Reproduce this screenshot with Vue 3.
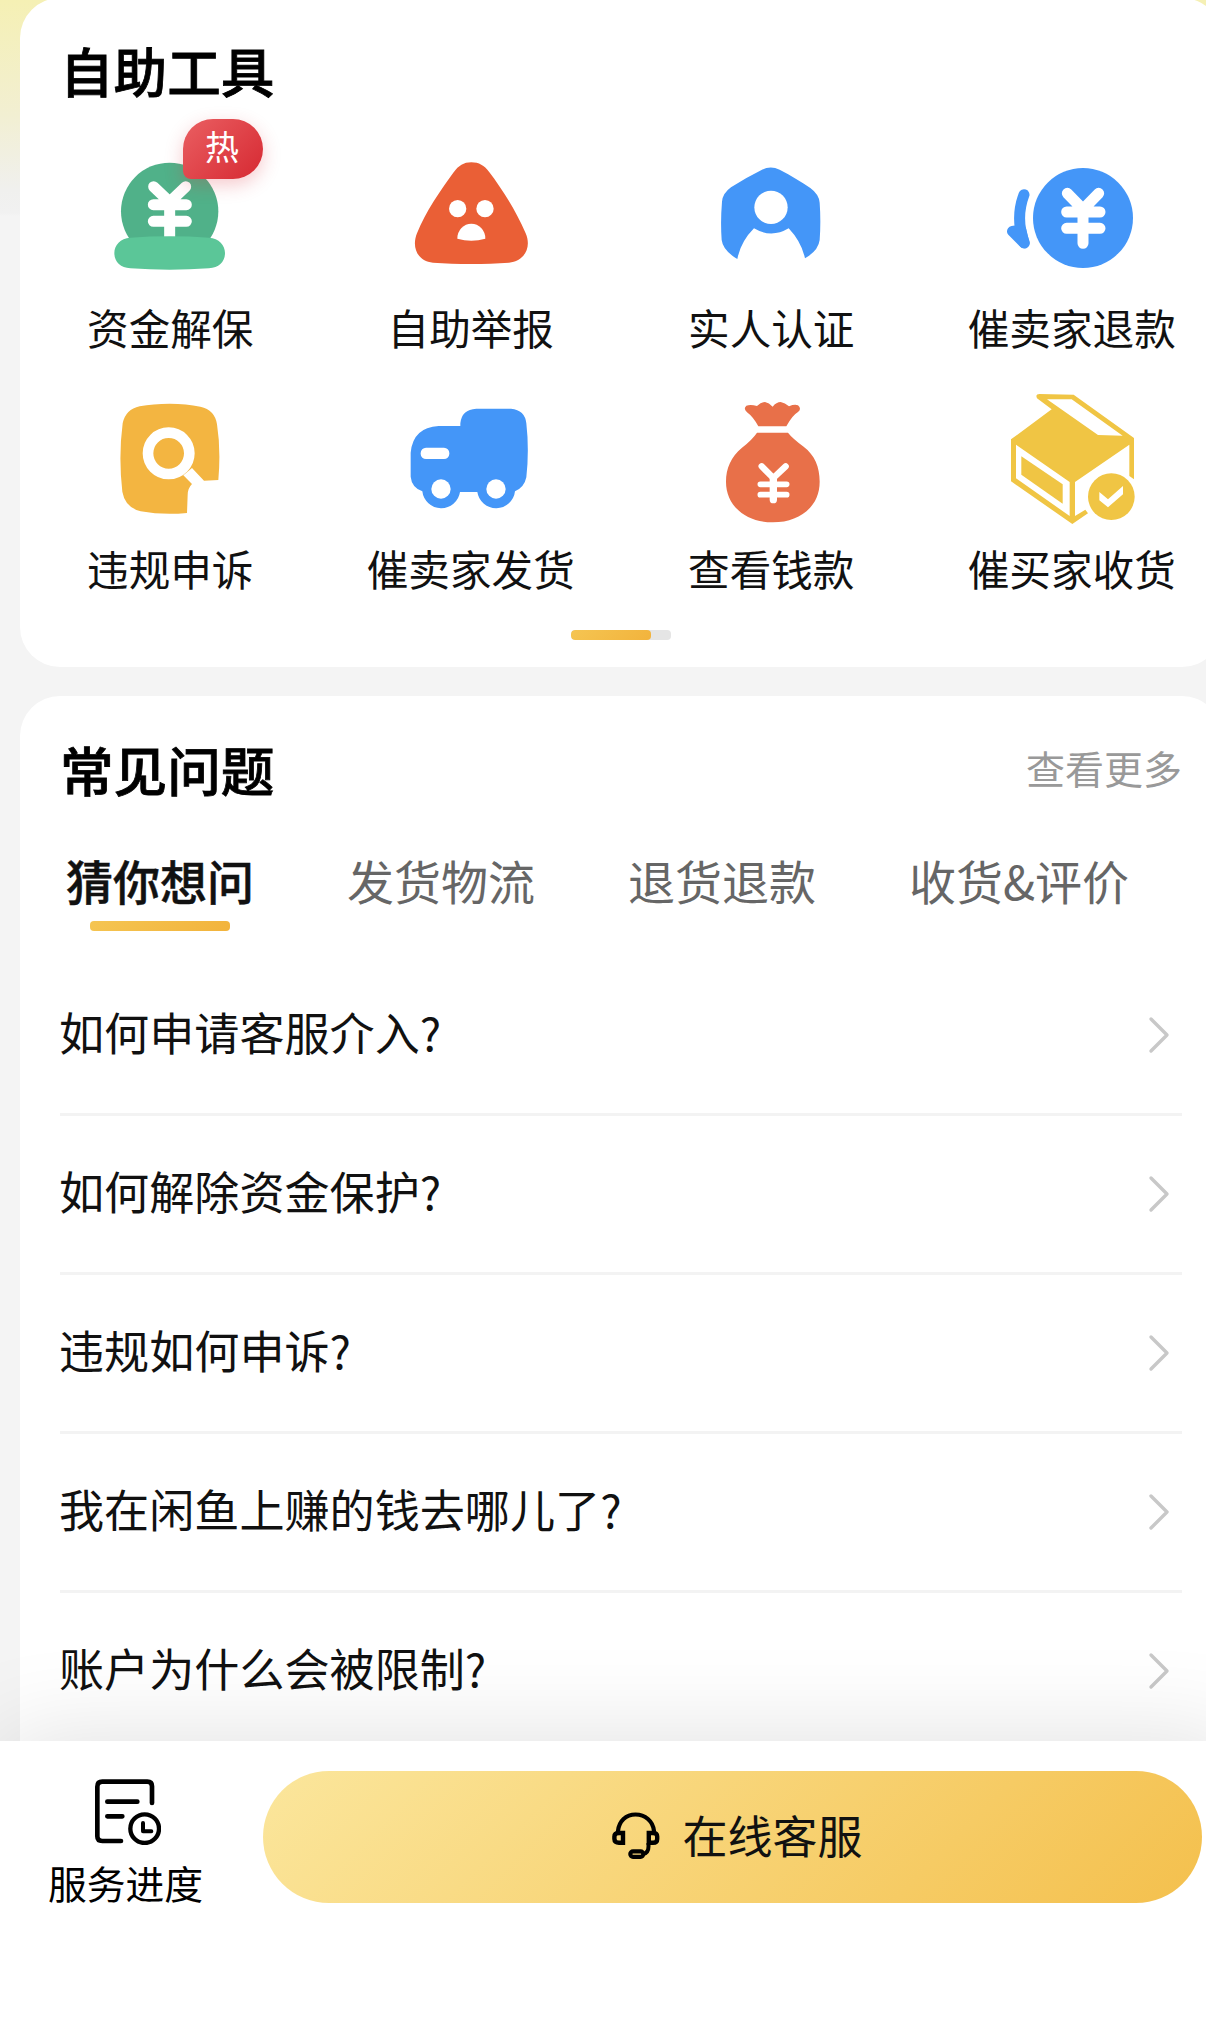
<script setup>
import { ref } from 'vue'

const tools = [
  { icon: 'guard', label: '资金解保', badge: '热', box: '316 450 390 420' },
  { icon: 'report', label: '自助举报', box: '137 60 390 420' },
  { icon: 'identity', label: '实人认证', box: '79 60 390 420' },
  { icon: 'refund', label: '催卖家退款', box: '170 60 390 420' },
  { icon: 'appeal', label: '违规申诉', box: '136 33 390 420' },
  { icon: 'truck', label: '催卖家发货', box: '167 33 390 420' },
  { icon: 'money', label: '查看钱款', box: '79 33 390 420' },
  { icon: 'parcel', label: '催买家收货', box: '170 33 390 420' },
]

const tabs = ['猜你想问', '发货物流', '退货退款', '收货&评价']
const activeTab = ref(0)

const questions = [
  '如何申请客服介入?',
  '如何解除资金保护?',
  '违规如何申诉?',
  '我在闲鱼上赚的钱去哪儿了?',
  '账户为什么会被限制?',
]
</script>

<template>
  <div class="page">
    <main class="content">
      <section class="card tools">
        <h2 class="title">自助工具</h2>
        <div class="tool-grid">
          <div v-for="tool in tools" :key="tool.label" class="tool">
            <svg class="tool-icon" :viewBox="tool.box">
              <g v-if="tool.icon === 'guard'">
                <circle cx="510" cy="634" r="146" fill="#50b189" />
                <g class="yen" stroke-width="33">
                  <path d="M462 560L510 606L558 560M461 614H560M461 664H560M510 606V712" />
                </g>
                <path fill="#5bc698" d="M392 713Q510 705 628 713C658 715 676 735 676 759C676 785 658 803 628 805Q510 813 392 805C362 803 344 785 344 759C344 735 362 715 392 713Z" />
              </g>
              <g v-else-if="tool.icon === 'report'">
                <path fill="#ea5f36" d="M333 97C356 97 372 107 386 125C422 172 466 240 496 310C516 356 488 395 446 398C375 403 290 403 218 398C174 394 152 354 170 310C196 245 240 182 280 127C295 107 310 97 333 97Z" />
                <circle cx="292" cy="236" r="26" fill="#fff" />
                <circle cx="374" cy="236" r="26" fill="#fff" />
                <path fill="#fff" d="M291 326A42 45 0 0 1 375 326Q333 338 291 326Z" />
              </g>
              <g v-else-if="tool.icon === 'identity'">
                <path fill="#4496f8" d="M247 119Q273 106 300 119C335 137 366 156 392 174Q418 193 420 218Q424 275 420 330Q416 362 376 385Q365 335 327 295Q275 326 223 295Q183 335 173 387Q130 362 126 330Q122 275 127 215Q129 190 154 172Q200 142 247 119Z" />
                <circle cx="274" cy="232" r="50" fill="#fff" />
              </g>
              <g v-else-if="tool.icon === 'refund'">
                <circle cx="398" cy="264" r="150" fill="#4496f8" />
                <g class="yen" stroke-width="33">
                  <path d="M351 190L398 238L445 190M349 246H449M349 295H449M398 238V340" />
                </g>
                <path class="round" fill="none" stroke="#4496f8" stroke-width="33" d="M221 194Q194 266 222 339" />
                <path class="round" fill="#4496f8" stroke="#4496f8" stroke-width="32" d="M186 304L221 339L212 300Z" />
              </g>
              <g v-else-if="tool.icon === 'appeal'">
                <path fill="#f3b541" d="M330 71Q380 71 422 80Q466 90 472 133Q484 210 476 300L433 302L397 264L371 286L397 312Q384 325 384 345L382 399Q310 406 243 394Q196 382 188 335Q176 230 189 130Q198 88 240 79Q280 71 330 71Z" />
                <circle cx="327" cy="220" r="62" fill="none" stroke="#fff" stroke-width="32" />
              </g>
              <g v-else-if="tool.icon === 'truck'">
                <path fill="#4496f8" d="M330 138V130Q334 88 378 86H482Q524 90 528 130Q537 210 528 292Q522 322 494 334A57 57 0 0 1 381 336H329A57 57 0 0 1 216 334Q184 322 181 290V218Q188 142 265 138Z" />
                <circle cx="272" cy="327" r="29" fill="#fff" />
                <circle cx="437" cy="327" r="29" fill="#fff" />
                <rect x="211" y="203" width="86" height="34" rx="16" fill="#fff" />
              </g>
              <g v-else-if="tool.icon === 'money'">
                <path fill="#e87049" d="M236 139Q220 110 202 97Q190 86 200 77Q213 73 232 78Q244 66 256 66Q268 68 279 80Q290 66 303 66Q316 68 328 79Q345 72 355 76Q367 86 355 96Q338 106 320 139Z" />
                <path fill="#e87049" d="M232 158H325Q337 174 372 200C405 225 420 260 420 305C420 380 360 427 280 427C195 427 139 375 139 305C139 265 154 230 187 203Q217 180 232 158Z" />
                <g class="yen" stroke-width="17">
                  <path stroke-width="19" d="M246 259L281 294L318 259" />
                  <path d="M242 313H321M242 344H321" />
                  <path stroke-width="22" d="M281 297V359" />
                </g>
              </g>
              <g v-else fill="#f0c544">
                <path fill-rule="evenodd" d="M182 178L304 88L260 55Q254 42 268 42L370 44L551 174V298L537 288V194L374 306V408L405 389L413 400L366 432L182 304ZM290 58L364 58L517 167L443 165ZM197 194L358 306V408L197 295Z" />
                <path d="M213 229L337 313V371L213 284Z" />
                <circle cx="483" cy="350" r="70" />
                <path fill="#fff" d="M447 336L473 358L518 318V343L473 382L447 361Z" />
              </g>
            </svg>
            <span class="tool-label">{{ tool.label }}</span>
            <span v-if="tool.badge" class="badge">{{ tool.badge }}</span>
          </div>
        </div>
        <div class="indicator"><span></span></div>
      </section>

      <section class="card faq">
        <header class="faq-head">
          <h2 class="title">常见问题</h2>
          <a class="more">查看更多</a>
        </header>
        <nav class="tabs">
          <span
            v-for="(tab, i) in tabs"
            :key="tab"
            class="tab"
            :class="{ active: i === activeTab }"
            @click="activeTab = i"
          >{{ tab }}</span>
        </nav>
        <ul class="questions">
          <li v-for="q in questions" :key="q">
            <span class="question">{{ q }}</span>
            <svg class="chevron" viewBox="0 0 24 40"><path d="M4 4L20 20L4 36" /></svg>
          </li>
        </ul>
      </section>
    </main>

    <footer class="bar">
      <div class="progress">
        <svg class="progress-icon" viewBox="284 418 198 198">
          <path stroke-width="14" d="M455 490V440Q455 426 441 426H306Q291 426 291 441V590Q291 604 306 604H362M321 486H411M321 530H366" />
          <circle cx="433" cy="567" r="43" stroke-width="13" />
          <path stroke-width="12" d="M428 550V575H453" />
        </svg>
        <span>服务进度</span>
      </div>
      <button class="chat">
        <svg class="headset" viewBox="0 0 48 48">
          <path stroke-width="4.2" d="M6 22V19C7 9 14 2.500 23.500 2.500S41 9 42 19V22" />
          <path stroke-width="4.400" d="M11 21V30.800H7Q2.400 30.800 2.400 27V24.500Q2.400 21 7 21ZM36.800 21V30.800H41Q45.200 30.800 45.200 27V24.500Q45.200 21 41 21Z" />
          <path stroke-width="4" d="M36.500 31V34.500Q36.500 41 31 42" />
          <rect x="18.300" y="39.400" width="13" height="5.400" rx="2.700" stroke-width="4.200" />
        </svg>
        <span class="chat-label">在线客服</span>
      </button>
    </footer>
  </div>
</template>

<style>
body { margin: 0; background: #fff; }
</style>

<style scoped>
.page {
  width: 1206px; height: 2035px;
  display: flex; flex-direction: column;
  overflow: hidden;
  font-family: "Noto Sans CJK SC", sans-serif;
  color: #111;
}

.content {
  box-sizing: border-box;
  flex: none;
  width: 1242px; height: 1741px;
  padding: 0 20px;
  overflow: hidden;
  background: linear-gradient(#f5f0b4, #f2efd2 115px, #f0f0ee 190px, #f1f1f1 213px, #f4f4f4 216px);
}

.card { box-sizing: border-box; width: 1202px; border-radius: 40px; background: #fff; }

.title {
  margin: 0;
  font-size: 53.6px; line-height: 60px; font-weight: 500; color: #000;
  -webkit-text-stroke: 0.8px;
}

.tools { height: 669px; margin-top: -2px; padding-top: 42px; }
.tools .title { padding-left: 40px; }

.tool-grid {
  display: grid; grid-template-columns: repeat(4, 1fr); grid-auto-rows: 241px;
  margin-top: 50px;
}

.tool { position: relative; display: flex; flex-direction: column; align-items: center; }
.tool-icon { width: 130px; height: 140px; overflow: visible; }
.tool-label { margin-top: 12px; font-size: 41.6px; line-height: 50px; white-space: nowrap; }

.yen { fill: none; stroke: #fff; stroke-linecap: round; stroke-linejoin: round; }
.round { stroke-linecap: round; stroke-linejoin: round; }

.badge {
  position: absolute; left: 163px; top: -31px;
  box-sizing: border-box;
  width: 80px; height: 60px; padding-right: 2px;
  border-radius: 30px 30px 30px 8px;
  background: linear-gradient(135deg, #ea5f62, #d62932);
  box-shadow: 0 6px 18px rgba(220, 45, 55, 0.25);
  font-size: 34px; line-height: 53px; text-align: center; color: #fff;
}

.indicator {
  width: 100px; height: 10px; margin: -2px auto 0;
  border-radius: 4px; background: #e5e5e5;
  overflow: hidden;

  & span { display: block; width: 80px; height: 10px; border-radius: 4px; background: linear-gradient(135deg, #f5c552, #f2b33c); }
}

.faq { height: 1300px; margin-top: 29px; padding: 43px 40px 0; }
.faq-head { display: flex; justify-content: space-between; align-items: flex-start; height: 60px; }
.more { font-size: 39px; line-height: 56px; color: #999; }

.tabs { display: flex; gap: 93px; margin: 44px 0 0 6px; }
.tab {
  display: flex; flex-direction: column; align-items: center;
  font-size: 47px; line-height: 74px; color: #666; white-space: nowrap;

  &.active { font-weight: 500; color: #111; -webkit-text-stroke: 0.5px }
  &.active::after { content: ""; width: 140px; height: 10px; margin-top: 4px; border-radius: 4px; background: linear-gradient(135deg, #f5c552, #f2b33c); }
}

.questions {
  margin: 26px 0 0; padding: 0; list-style: none;

  & li {
    box-sizing: border-box;
    display: flex; justify-content: space-between; align-items: center;
    height: 159px; padding-right: 11px;
    border-bottom: 3px solid #f3f3f3;
    font-size: 45.1px; line-height: 60px;
  }
}
.question { margin-left: -1px; padding-bottom: 6px; }
.chevron { width: 24px; height: 40px; fill: none; stroke: #c8c8c8; stroke-width: 3.4; stroke-linecap: round; stroke-linejoin: round; }

.bar {
  box-sizing: border-box;
  position: relative;
  flex: none;
  display: flex; align-items: flex-start;
  width: 1242px; height: 294px; padding: 30px 40px 0 0;
  background: #fff;
  box-shadow: 0 0 100px rgba(0, 0, 0, 0.13);
}

.progress {
  display: flex; flex-direction: column; align-items: center;
  width: 251px; margin-right: 12px; padding-top: 8px;
  font-size: 38.8px; line-height: 50px; color: #000;
}
.progress-icon { width: 66px; height: 66px; margin: 0 0 12px 5px; fill: none; stroke: #000; stroke-linecap: round; stroke-linejoin: round; }

.chat {
  flex: 1;
  display: flex; align-items: center; justify-content: center; gap: 22px;
  height: 132px; padding: 0 0 0 10px; border: 0; border-radius: 66px;
  background: linear-gradient(135deg, #fbe69c, #f4c04d);
  font: inherit; font-size: 45px; color: #111;
}
.chat-label { padding-bottom: 6px; }
.headset { width: 48px; height: 48px; margin-bottom: 2px; fill: none; stroke: #000; }
</style>
